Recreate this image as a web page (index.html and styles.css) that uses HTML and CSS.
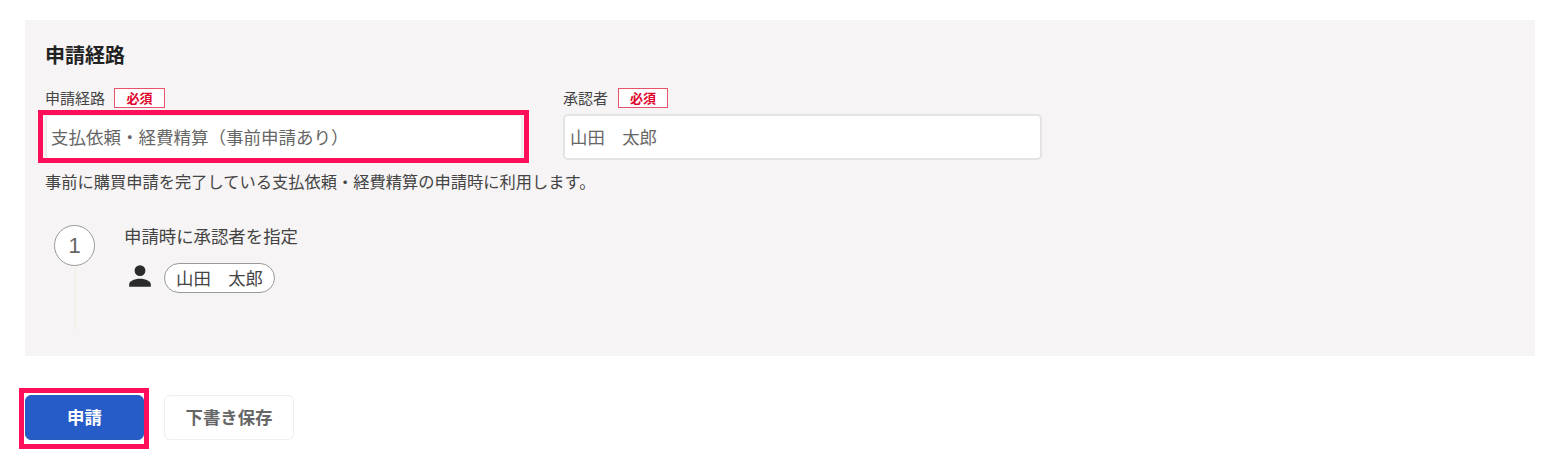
FILE: index.html
```html
<!DOCTYPE html>
<html lang="ja">
<head>
<meta charset="utf-8">
<title>申請経路</title>
<link rel="stylesheet" href="styles.css">
</head>
<body>
<section class="panel">
  <h2 class="title">申請経路</h2>
  <div class="fields">
    <div class="field">
      <div class="label-row"><span class="label">申請経路</span><span class="req">必須</span></div>
      <div class="input first">支払依頼・経費精算（事前申請あり）<span class="mark mark-input"></span></div>
    </div>
    <div class="field field-second">
      <div class="label-row"><span class="label">承認者</span><span class="req">必須</span></div>
      <div class="input">山田　太郎</div>
    </div>
  </div>
  <p class="hint">事前に購買申請を完了している支払依頼・経費精算の申請時に利用します。</p>
  <div class="step">
    <div class="rail">
      <div class="num">1</div>
      <div class="line"></div>
    </div>
    <div class="body">
      <div class="step-title">申請時に承認者を指定</div>
      <div class="approver">
        <svg class="user" viewBox="0 0 24 24" aria-hidden="true"><path d="M12 12a5 5 0 1 0 0-10 5 5 0 0 0 0 10zm0 2.500c-3.400 0-10 1.700-10 5V22h20v-2.500c0-3.300-6.600-5-10-5z"/></svg>
        <span class="chip">山田　太郎</span>
      </div>
    </div>
  </div>
</section>
<div class="actions">
  <button class="btn primary">申請<span class="mark mark-btn"></span></button>
  <button class="btn secondary">下書き保存</button>
</div>
</body>
</html>
```
FILE: styles.css
```css
* { box-sizing: border-box; }
html, body { margin: 0; padding: 0; }
body {
  width: 1566px;
  height: 467px;
  overflow: hidden;
  background: #fff;
  color: #333;
  font-family: "Noto Sans CJK JP", "Noto Sans", sans-serif;
}
.panel {
  margin: 20px 0 0 25px;
  width: 1510px;
  height: 336px;
  padding: 21px 20px 0;
  background: #f6f4f5;
}
.title {
  margin: 0;
  font-size: 20px;
  line-height: 28px;
  font-weight: 700;
  color: #222;
}
.fields { display: flex; gap: 40px; margin-top: 19px; }
.field { width: 478px; }
.field-second { width: 479px; }
.label-row { display: flex; align-items: center; gap: 9px; height: 20px; }
.field-second .label-row { gap: 10px; }
.field-second .req { width: 50px; }
.label { font-size: 15px; line-height: 20px; color: #444; }
.req {
  width: 51px;
  height: 20px;
  border: 1px solid #e8526a;
  background: #fff;
  color: #e0042c;
  font-size: 13px;
  font-weight: 700;
  line-height: 18px;
  text-align: center;
}
.input {
  position: relative;
  margin-top: 6px;
  height: 46px;
  padding: 0 5px;
  background: #fff;
  border: 2px solid #e4e4e4;
  border-radius: 5px;
  font-size: 17.4px;
  line-height: 42px;
  color: #666;
  white-space: pre;
}
.first { border-color: #eee; padding-left: 4px; font-size: 17.5px; }
.hint {
  margin: 10px 0 0;
  font-size: 16.25px;
  line-height: 22px;
  color: #444;
}
.step { display: flex; margin: 33px 0 0 9px; }
.rail { width: 41px; display: flex; flex-direction: column; align-items: center; }
.num {
  width: 41px;
  height: 41px;
  border: 1px solid #999;
  border-radius: 50%;
  background: #fff;
  font-family: "Liberation Sans", sans-serif;
  font-size: 22px;
  line-height: 39px;
  text-align: center;
  color: #666;
}
.line { width: 2px; height: 64px; background: #f3f0e8; }
.body { margin-left: 29px; margin-top: 1px; }
.step-title { font-size: 17.4px; line-height: 20px; color: #444; }
.approver { display: flex; align-items: flex-start; margin-top: 17px; }
.user { width: 26px; height: 26px; margin-left: 3px; fill: #2b2b2b; }
.chip {
  margin-left: 11px;
  height: 30px;
  padding: 0 11px;
  border: 1px solid #999;
  border-radius: 15px;
  background: #fff;
  font-size: 17.4px;
  line-height: 28px;
  color: #444;
  white-space: pre;
}
.actions { display: flex; gap: 20px; margin: 39px 0 0 25px; }
.btn {
  position: relative;
  height: 45px;
  border-radius: 6px;
  font-family: inherit;
  font-size: 17.4px;
  font-weight: 700;
  line-height: 41px;
  padding: 0 0 2px;
}
.primary { width: 119px; background: #265cc8; border: 1px solid #2a5bc0; color: #fff; }
.secondary { width: 130px; background: #fff; border: 1px solid #eee; color: #666; }
.mark { position: absolute; border: 5px solid #ff0f5a; pointer-events: none; }
.mark-input { left: -9px; top: -6px; width: 491px; height: 53px; }
.mark-btn { left: -7px; top: -8px; width: 130px; height: 61px; }
```
